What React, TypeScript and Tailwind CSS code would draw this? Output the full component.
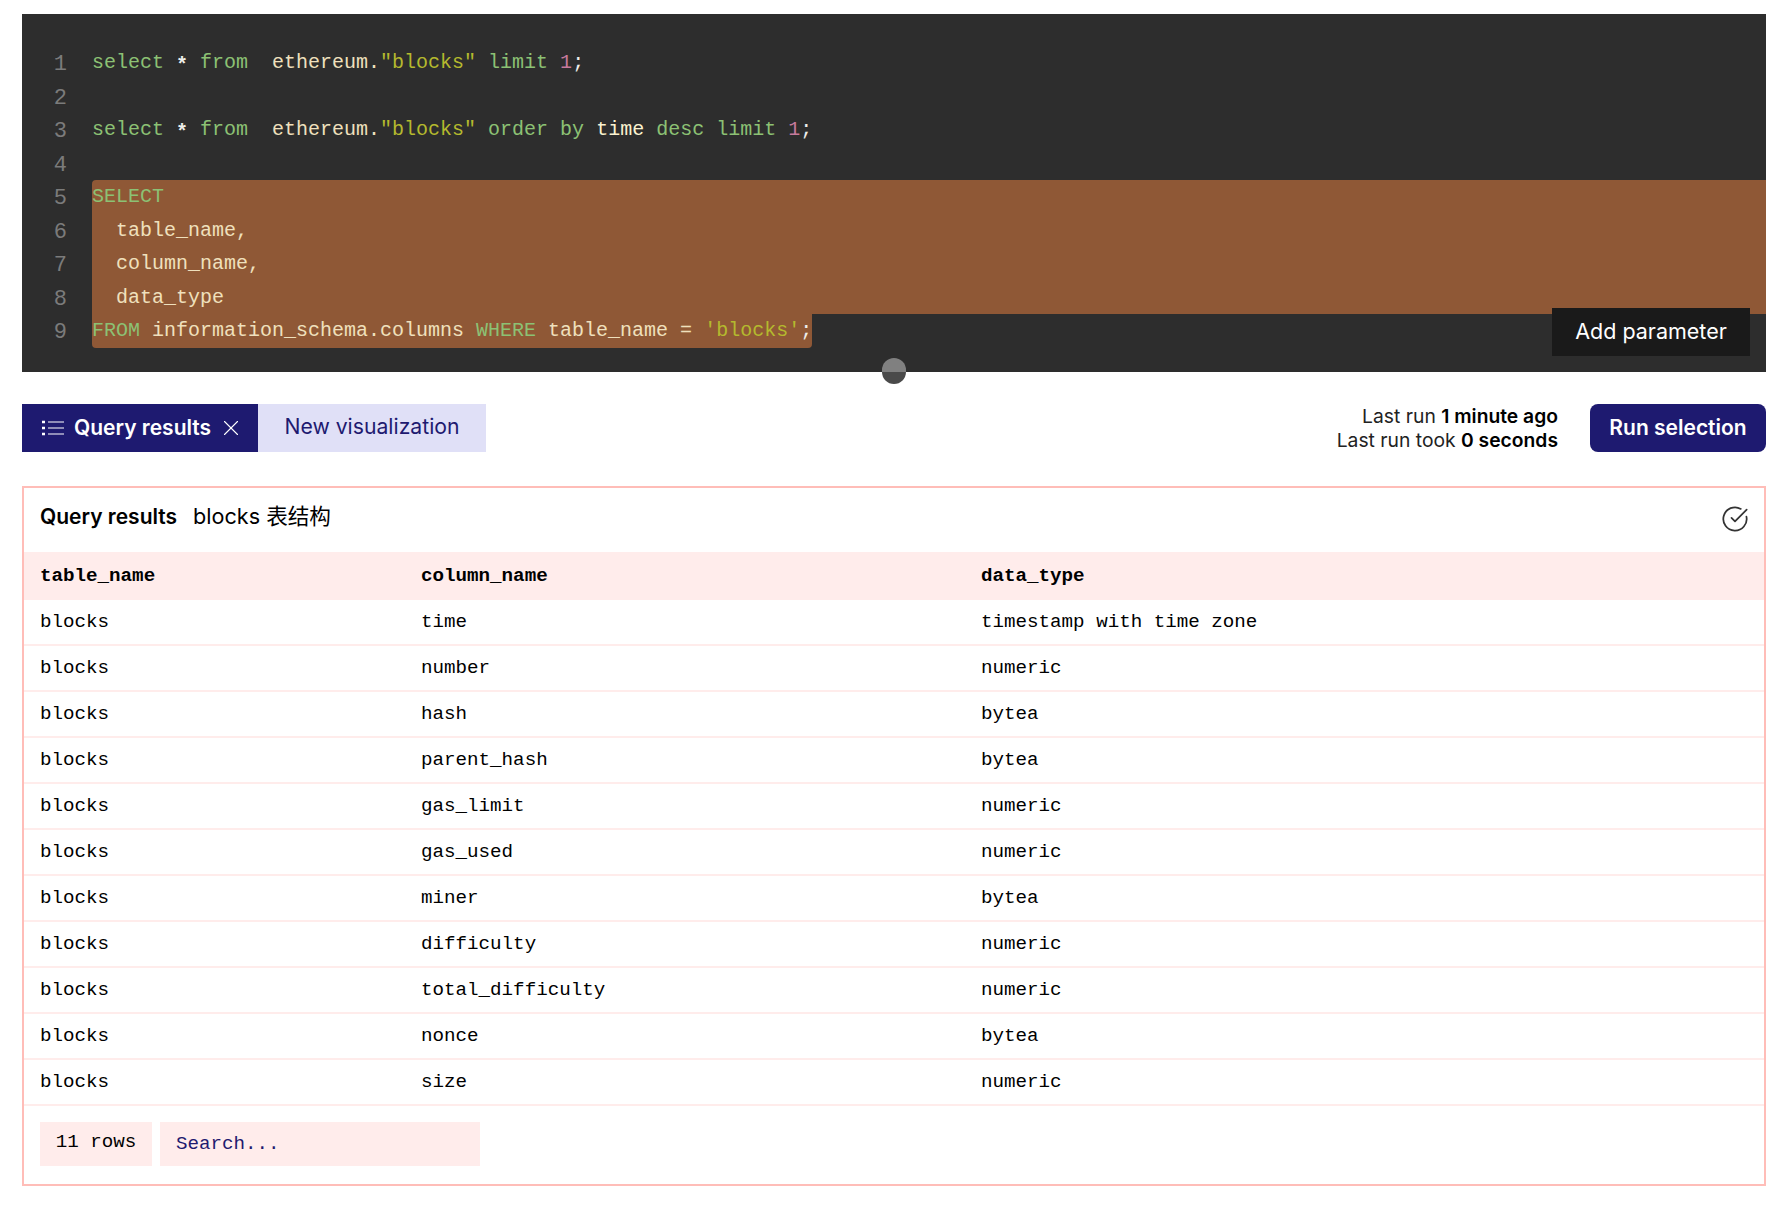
import { CircleCheckBig, X } from "lucide-react";

const G = "text-[#8cc174]";
const C = "text-[#efe0bd]";
const Y = "text-[#b4b92e]";
const P = "text-[#c67a9c]";
const W = "text-[#eeeeea]";
const S = "inline-block translate-y-[3px] font-bold text-[#eeeeea]";

type Seg = [string, string];
const code: { segs: Seg[]; sel?: "first" | "full" | "last" }[] = [
  { segs: [["select ", G], ["*", S], [" from", G], ["  ethereum.", C], ['"blocks"', Y], [" limit ", G], ["1", P], [";", W]] },
  { segs: [] },
  { segs: [["select ", G], ["*", S], [" from", G], ["  ethereum.", C], ['"blocks"', Y], [" order by ", G], ["time", "text-[#fbf3d0]"], [" desc limit ", G], ["1", P], [";", W]] },
  { segs: [] },
  { segs: [["SELECT", G]], sel: "first" },
  { segs: [["  table_name,", C]], sel: "full" },
  { segs: [["  column_name,", C]], sel: "full" },
  { segs: [["  data_type", C]], sel: "full" },
  { segs: [["FROM", G], [" information_schema.columns ", C], ["WHERE", G], [" table_name = ", C], ["'blocks'", Y], [";", W]], sel: "last" },
];

const rows = [
  ["time", "timestamp with time zone"],
  ["number", "numeric"],
  ["hash", "bytea"],
  ["parent_hash", "bytea"],
  ["gas_limit", "numeric"],
  ["gas_used", "numeric"],
  ["miner", "bytea"],
  ["difficulty", "numeric"],
  ["total_difficulty", "numeric"],
  ["nonce", "bytea"],
  ["size", "numeric"],
];

const mono = "font-['Liberation_Mono',monospace]";
const sans = "font-['Inter','Noto_Sans_CJK_SC',sans-serif]";

function ListIcon() {
  return (
    <svg width="22" height="16" viewBox="0 0 22 16" fill="none" className="shrink-0">
      <path d="M0 2h3M0 8h3M0 14h3" stroke="currentColor" strokeWidth="2.6" />
      <path d="M6 2h16M6 8h16M6 14h16" stroke="currentColor" strokeWidth="1.2" />
    </svg>
  );
}

export default function App() {
  return (
    <div className={`w-[1784px] h-[1206px] bg-white pt-[14px] pl-[22px] pr-[18px] overflow-hidden ${sans}`}>
      <div className="relative h-[358px] bg-[#2d2d2d] pt-[32px]">
        <div className={`text-[20px] ${mono}`}>
          {code.map((line, i) => (
            <div key={i} className="flex h-[33.5px] leading-[33.5px]">
              <div className="w-[45px] shrink-0 pt-[2px] text-right text-[22px] text-[#7b7b7b]">{i + 1}</div>
              <div className="w-[25px] shrink-0" />
              <div
                className={
                  line.sel === "first"
                    ? "flex-1 whitespace-pre rounded-tl-[4px] bg-[#8f5836]"
                    : line.sel === "full"
                    ? "flex-1 whitespace-pre bg-[#8f5836]"
                    : line.sel === "last"
                    ? "w-[720px] whitespace-pre rounded-b-[4px] bg-[#8f5836]"
                    : "flex-1 whitespace-pre"
                }
              >
                {line.segs.map(([t, c], j) => (
                  <span key={j} className={c}>{t}</span>
                ))}
              </div>
            </div>
          ))}
        </div>
        <button className="absolute right-[16px] top-[294px] h-[48px] w-[198px] bg-[#1a1a1a] pb-[2px] text-[21.5px] text-white">
          Add parameter
        </button>
        <div className="absolute left-[860px] top-[344px] h-[26px] w-[24px] rounded-full bg-[linear-gradient(#808080_54%,#4a4a4a_54%)]" />
      </div>

      <div className="mt-[32px] flex h-[48px] items-center">
        <div className="flex h-full w-[236px] items-center bg-[#1e1a70] pl-[20px] text-white">
          <ListIcon />
          <span className="ml-[10px] text-[21px] font-semibold">Query results</span>
          <X size={26} strokeWidth={1} className="ml-[7px]" />
        </div>
        <div className="flex h-full w-[228px] items-center justify-center bg-[#e0e0f7] pb-[2px] text-[21.2px] text-[#1e1a70]">
          New visualization
        </div>
        <div className="ml-auto text-right text-[19.3px] leading-[24px] text-[#222]">
          <div>Last run <span className="font-semibold text-black">1 minute ago</span></div>
          <div>Last run took <span className="font-semibold text-black">0 seconds</span></div>
        </div>
        <button className="ml-[32px] h-full w-[176px] rounded-[8px] bg-[#1e1a70] text-[21px] font-semibold text-white">
          Run selection
        </button>
      </div>

      <div className="mt-[34px] h-[700px] border-2 border-[#ffbdb8]">
        <div className="flex h-[64px] items-center justify-between pl-[16px] pr-[15px] text-[21px] text-black">
          <div className="mb-[7px] flex items-center">
            <span className="font-semibold">Query results</span>
            <span className="ml-[16px] text-[21.6px]">blocks 表结构</span>
          </div>
          <CircleCheckBig size={28} strokeWidth={1.5} className="mb-[2px] text-[#333]" />
        </div>
        <div className={`text-[19.2px] text-black ${mono}`}>
          <div className="flex h-[48px] items-center bg-[#ffeceb] pl-[16px] font-bold">
            <div className="w-[381px]">table_name</div>
            <div className="w-[560px]">column_name</div>
            <div>data_type</div>
          </div>
          {rows.map(([col, type]) => (
            <div key={col} className="flex h-[46px] items-center border-b-2 border-[#ffeceb] pl-[16px]">
              <div className="w-[381px]">blocks</div>
              <div className="w-[560px]">{col}</div>
              <div>{type}</div>
            </div>
          ))}
          <div className="mt-[16px] flex gap-[8px] pl-[16px]">
            <div className="flex h-[44px] w-[112px] items-center justify-center bg-[#ffeceb] pb-[4px]">11 rows</div>
            <input
              placeholder="Search..."
              className="h-[44px] w-[320px] bg-[#ffeceb] px-[16px] outline-none placeholder:text-[#1e1a70]"
            />
          </div>
        </div>
      </div>
    </div>
  );
}
